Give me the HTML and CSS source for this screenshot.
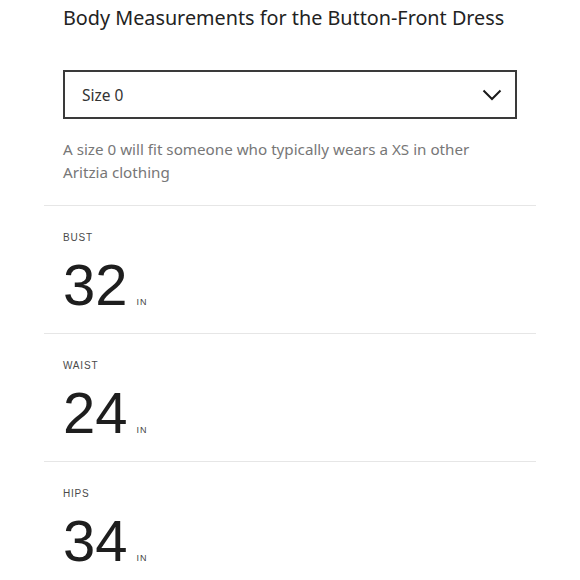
FILE: index.html
```html
<!DOCTYPE html>
<html lang="en">
<head>
    <meta charset="UTF-8">
    <title>Body Measurements</title>
    <link rel="stylesheet" href="styles.css">
</head>
<body>
    <div class="sheet">
        <div class="intro">
            <h1 class="sheet-title">Body Measurements for the Button-Front Dress</h1>
            <div class="size-select">
                <span>Size 0</span>
                <svg class="chevron" width="20" height="12" viewBox="0 0 20 12">
                    <path d="M1.5 1.5 L10 10 L18.5 1.5" fill="none" stroke="#1a1a1a" stroke-width="2"/>
                </svg>
            </div>
            <p class="size-note">A size 0 will fit someone who typically wears a XS in other Aritzia clothing</p>
        </div>

        <div class="measure">
            <div class="measure-label">BUST</div>
            <div class="measure-value">32<span class="unit">IN</span></div>
        </div>
        <div class="measure">
            <div class="measure-label">WAIST</div>
            <div class="measure-value">24<span class="unit">IN</span></div>
        </div>
        <div class="measure">
            <div class="measure-label">HIPS</div>
            <div class="measure-value">34<span class="unit">IN</span></div>
        </div>
    </div>
</body>
</html>
```

FILE: styles.css
```css
/* Base */
body {
    margin: 0;
    background-color: #ffffff;
    font-family: 'Noto Sans', sans-serif;
    color: #222;
}

/* Main panel */
.sheet {
    padding: 0 44px;
}

.intro {
    padding: 4px 19px 21px;
}

.sheet-title {
    margin: 0;
    font-size: 19.8px;
    font-weight: 400;
    line-height: 28px;
    color: #222;
}

/* Size dropdown */
.size-select {
    margin-top: 38px;
    height: 45px;
    border: 2px solid #3a3a3a;
    display: flex;
    align-items: center;
    justify-content: space-between;
    padding: 0 13px 0 17px;
    font-size: 15.5px;
    color: #333;
}

.chevron {
    display: block;
}

.size-note {
    margin: 19px 0 0;
    max-width: 440px;
    font-size: 15.2px;
    line-height: 23px;
    color: #777;
}

/* Measurement rows */
.measure {
    border-top: 1px solid #e6e6e6;
    padding: 25px 19px 19px;
}

.measure-label {
    font-family: 'Liberation Sans', sans-serif;
    font-size: 10px;
    line-height: 14px;
    letter-spacing: 0.8px;
    color: #4a4a4a;
}

.measure-value {
    margin-top: 11px;
    display: flex;
    align-items: baseline;
    gap: 9px;
    font-family: 'Liberation Sans', sans-serif;
    font-size: 58px;
    line-height: 58px;
    color: #1e1e1e;
}

.unit {
    font-size: 9px;
    line-height: 1;
    letter-spacing: 1px;
    color: #444;
}
```
